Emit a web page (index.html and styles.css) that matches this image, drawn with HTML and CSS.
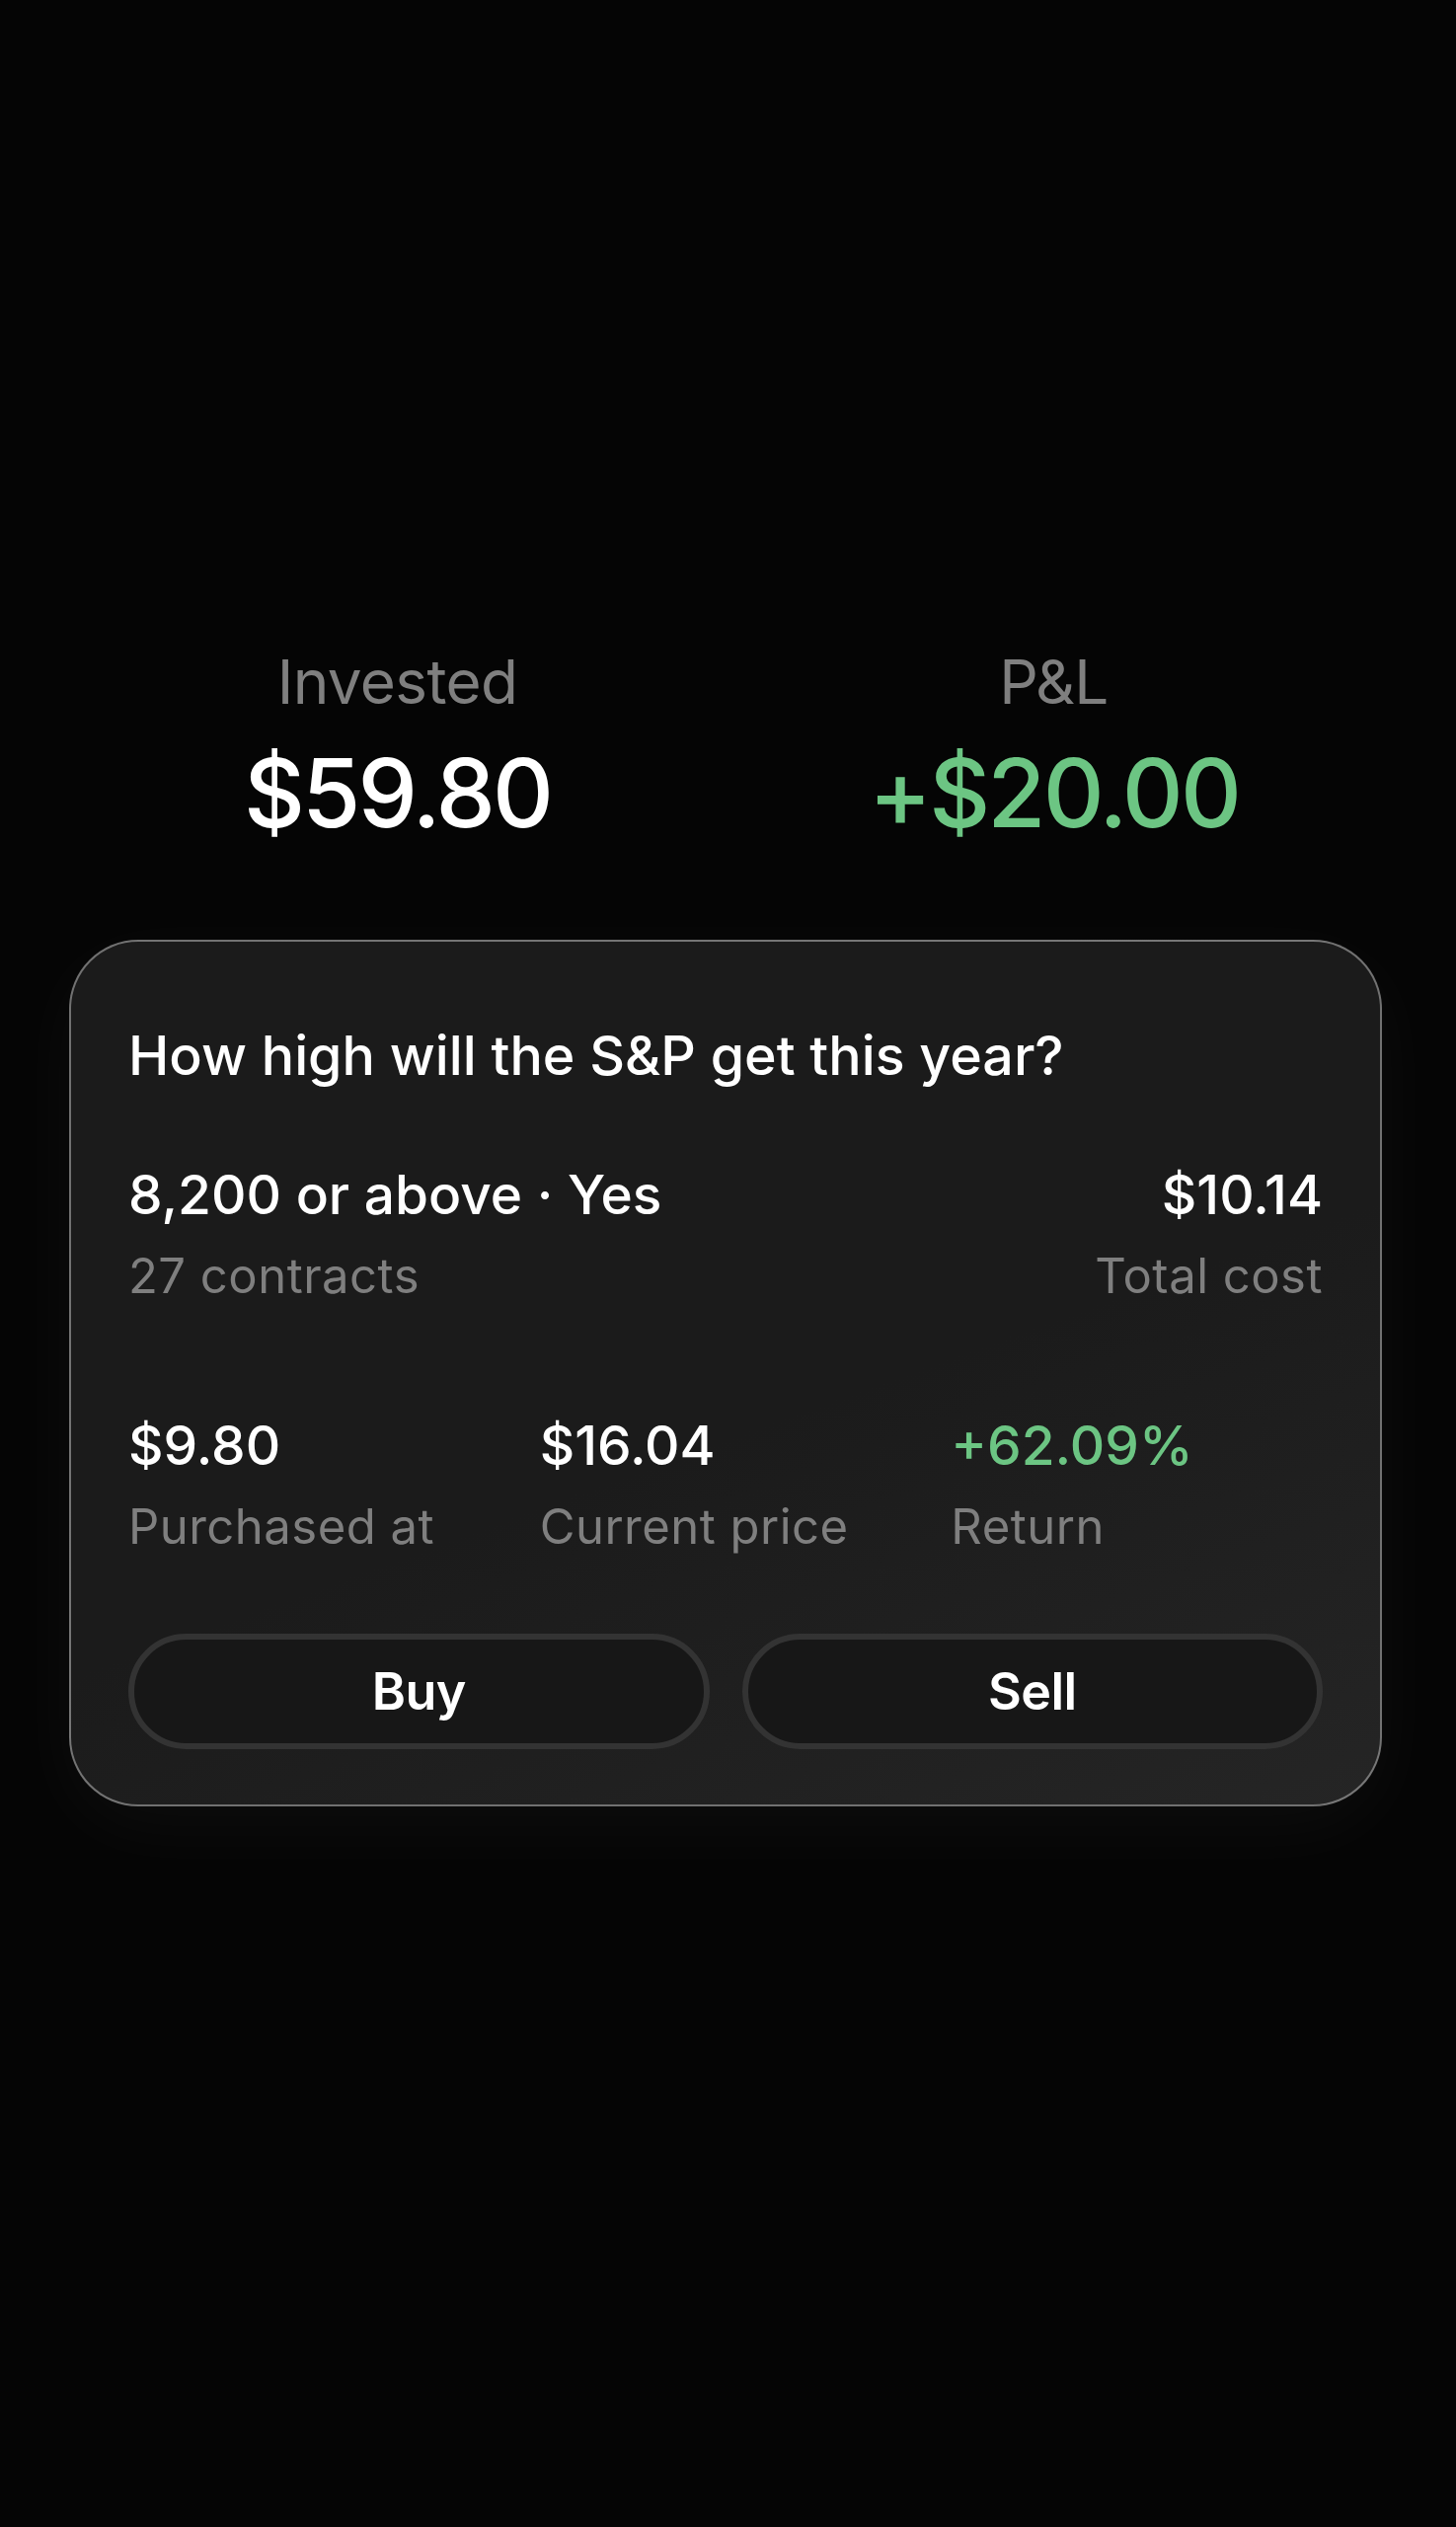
FILE: index.html
```html
<!DOCTYPE html>
<html lang="en">

<head>
    <meta charset="UTF-8">
    <meta name="viewport" content="width=device-width, initial-scale=1.0">
    <title>Position</title>
    <link rel="stylesheet" href="styles.css">
</head>

<body>
    <div class="main">
        <div class="summary">
            <div class="summary-item">
                <p class="summary-label">Invested</p>
                <p class="summary-value">$59.80</p>
            </div>
            <div class="summary-item">
                <p class="summary-label">P&amp;L</p>
                <p class="summary-value positive">+$20.00</p>
            </div>
        </div>

        <div class="position-card">
            <h2 class="question">How high will the S&amp;P get this year?</h2>

            <div class="outcome-row">
                <div>
                    <p class="big">8,200 or above · Yes</p>
                    <p class="small">27 contracts</p>
                </div>
                <div class="right">
                    <p class="big">$10.14</p>
                    <p class="small">Total cost</p>
                </div>
            </div>

            <div class="stats">
                <div>
                    <p class="big">$9.80</p>
                    <p class="small">Purchased at</p>
                </div>
                <div>
                    <p class="big">$16.04</p>
                    <p class="small">Current price</p>
                </div>
                <div>
                    <p class="big positive">+62.09%</p>
                    <p class="small">Return</p>
                </div>
            </div>

            <div class="actions">
                <button class="action-btn">Buy</button>
                <button class="action-btn">Sell</button>
            </div>
        </div>
    </div>
</body>

</html>
```

FILE: styles.css
```css
* {
    box-sizing: border-box;
}

body {
    margin: 0;
    background-color: #050505;
    font-family: Inter, "Noto Sans", sans-serif;
    color: #ffffff;
}

p,
h2 {
    margin: 0;
}

.main {
    width: 1330px;
    margin: 0 0 0 70px;
    padding-top: 654px;
    min-height: 2560px;
}

.summary {
    display: grid;
    grid-template-columns: 1fr 1fr;
    text-align: center;
    margin-bottom: 90px;
}

.summary-label {
    font-size: 62px;
    line-height: 1.2;
    color: #7f7f7f;
    letter-spacing: -0.01em;
}

.summary-value {
    margin-top: 18px;
    font-size: 96px;
    line-height: 1.2;
    font-weight: 500;
    letter-spacing: -0.03em;
}

.positive {
    color: #6cc583;
}

.position-card {
    background: linear-gradient(160deg, #1b1b1b 55%, #252525 100%);
    border: 2px solid rgba(255, 255, 255, 0.38);
    border-radius: 70px;
    padding: 82px 58px 56px 58px;
    box-shadow: 0 20px 80px rgba(255, 255, 255, 0.04);
}

.question {
    font-size: 55.5px;
    line-height: 1.2;
    font-weight: 500;
    margin-bottom: 75px;
}

.big {
    font-size: 55px;
    line-height: 1.2;
    font-weight: 500;
}

.small {
    margin-top: 21px;
    font-size: 49px;
    line-height: 1.2;
    color: #7f7f7f;
    letter-spacing: 0.01em;
}

.outcome-row {
    display: flex;
    justify-content: space-between;
    margin-bottom: 108px;
}

.right {
    text-align: right;
}

.stats {
    display: grid;
    grid-template-columns: 1fr 1fr 1fr;
    gap: 40px;
    margin-bottom: 78px;
}

.actions {
    display: grid;
    grid-template-columns: 1fr 1fr;
    gap: 33px;
}

.action-btn {
    height: 117px;
    background-color: #171717;
    border: 6px solid #333333;
    border-radius: 60px;
    color: #ffffff;
    font-family: Inter, "Noto Sans", sans-serif;
    font-size: 52px;
    font-weight: 600;
    letter-spacing: -0.01em;
    cursor: pointer;
}
```
